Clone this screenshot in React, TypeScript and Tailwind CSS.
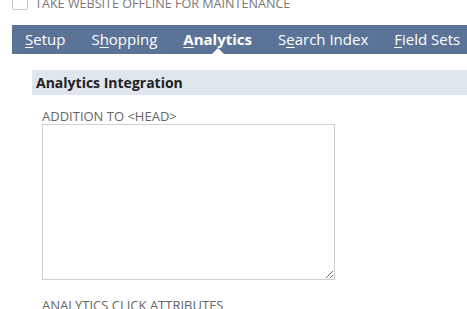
import React from 'react';

const tabs = [
    { pre: '', key: 'S', post: 'etup' },
    { pre: 'S', key: 'h', post: 'opping' },
    { pre: '', key: 'A', post: 'nalytics', active: true },
    { pre: 'S', key: 'e', post: 'arch Index' },
    { pre: '', key: 'F', post: 'ield Sets' },
];

export default function App() {
    return (
        <div className="w-[467px] h-[309px] overflow-hidden bg-white" style={{ fontFamily: '"Open Sans", sans-serif' }}>
            {/* maintenance checkbox, cut off at the top */}
            <div className="flex items-center h-[20px] mt-[-6px] pl-[12px]">
                <span className="w-[16px] h-[16px] mt-[-4px] border border-[#c8c8c8] bg-white rounded-[2px]" />
                <span className="ml-[7px] text-[12.6px] text-[#777]">TAKE WEBSITE OFFLINE FOR MAINTENANCE</span>
            </div>

            {/* tab bar */}
            <div className="ml-[12px] mt-[11px] h-[29px] bg-[#5b7397] flex items-center pl-[13px]">
                {tabs.map((t, i) => (
                    <div key={i} className="relative h-full flex items-center mr-[26px]">
                        <span className={`text-[15px] text-white whitespace-nowrap ${t.active ? 'font-bold' : ''}`}>
                            {t.pre}<span className="underline underline-offset-[2px]">{t.key}</span>{t.post}
                        </span>
                        {t.active && (
                            <span className="absolute bottom-0 left-1/2 -translate-x-1/2 w-0 h-0 border-l-[6px] border-r-[6px] border-b-[6px] border-l-transparent border-r-transparent border-b-white" />
                        )}
                    </div>
                ))}
            </div>

            {/* section */}
            <div className="ml-[32px] mt-[16px] h-[25px] bg-[#e0e6ee] flex items-center pl-[4px]">
                <span className="text-[14px] font-bold text-[#222]">Analytics Integration</span>
            </div>

            <div className="ml-[42px] mt-[13px] text-[13px] text-[#666] leading-[16px]">ADDITION TO &lt;HEAD&gt;</div>
            <textarea className="block ml-[42px] mt-[0px] w-[293px] h-[156px] border border-[#d0d0d0] bg-white resize" />

            <div className="ml-[42px] mt-[17px] text-[13px] text-[#666] leading-[16px]">ANALYTICS CLICK ATTRIBUTES</div>
        </div>
    );
}
